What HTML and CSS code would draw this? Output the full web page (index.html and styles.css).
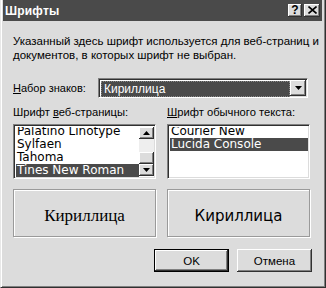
FILE: index.html
```html
<!DOCTYPE html>
<html>
<head>
<meta charset="utf-8">
<link rel="stylesheet" href="styles.css">
</head>
<body>
<div class="win">
  <div class="titlebar">
    <span class="title">Шрифты</span>
    <div class="tbtns">
      <span class="tbtn">?</span>
      <span class="tbtn close">
        <svg width="9" height="8" viewBox="0 0 9 8"><path d="M0.5 0.5L8.5 7.5M8.5 0.5L0.5 7.5" stroke="#000" stroke-width="1.6"/></svg>
      </span>
    </div>
  </div>
  <div class="body">
    <p class="intro">Указанный здесь шрифт используется для веб-страниц и документов, в которых шрифт не выбран.</p>
    <div class="charset">
      <span class="lbl"><u>Н</u>абор знаков:</span>
      <div class="combo">
        <span class="combo-val">Кириллица</span>
        <span class="combo-btn"><svg width="7" height="4" viewBox="0 0 7 4"><path d="M0 0H7L3.5 4Z" fill="#000"/></svg></span>
      </div>
    </div>
    <div class="cols">
      <div class="col">
        <div class="lbl">Шрифт <u>в</u>еб-страницы:</div>
        <div class="list">
          <div class="items">
            <div class="item">Palatino Linotype</div>
            <div class="item">Sylfaen</div>
            <div class="item">Tahoma</div>
            <div class="item sel">Tines New Roman</div>
          </div>
          <div class="sbar">
            <span class="sbtn"><svg width="7" height="4" viewBox="0 0 7 4"><path d="M0 4H7L3.5 0Z" fill="#000"/></svg></span>
            <span class="strack"></span>
            <span class="sthumb"></span>
            <span class="sbtn"><svg width="7" height="4" viewBox="0 0 7 4"><path d="M0 0H7L3.5 4Z" fill="#000"/></svg></span>
          </div>
        </div>
        <div class="preview serif">Кириллица</div>
      </div>
      <div class="col">
        <div class="lbl"><u>Ш</u>рифт обычного текста:</div>
        <div class="list">
          <div class="items">
            <div class="item">Courier New</div>
            <div class="item sel">Lucida Console</div>
          </div>
        </div>
        <div class="preview sans">Кириллица</div>
      </div>
    </div>
    <div class="buttons">
      <button class="btn default">OK</button>
      <button class="btn">Отмена</button>
    </div>
  </div>
</div>
</body>
</html>
```
FILE: styles.css
```css
html, body {
  margin: 0;
  padding: 0;
  background: #dcdcdc;
}
.win {
  width: 326px;
  height: 288px;
  box-sizing: border-box;
  background: #dcdcdc;
  border-left: 1px solid #e8e8e8;
  border-right: 1px solid #303030;
  border-bottom: 1px solid #303030;
  box-shadow: inset 1px 0 #fff, inset -1px -1px #808080;
  padding: 0 3px 0 2px;
  font-family: "Liberation Sans", Arial, sans-serif;
  font-size: 11px;
  color: #000;
  display: flex;
  flex-direction: column;
}
.titlebar {
  height: 21px;
  background: #4a4a4a;
  display: flex;
  align-items: center;
  justify-content: space-between;
  padding: 0 2px 0 2px;
}
.title {
  color: #fff;
  font-weight: bold;
  font-size: 12px;
  letter-spacing: 0.2px;
}
.tbtns {
  display: flex;
  gap: 2px;
}
.tbtn {
  width: 14px;
  height: 13px;
  background: #dcdcdc;
  box-shadow: inset -1px -1px #303030, inset 1px 1px #fff, inset -2px -2px #808080;
  display: flex;
  align-items: center;
  justify-content: center;
  font-weight: bold;
  font-size: 12px;
  line-height: 1;
  box-sizing: border-box;
  padding-bottom: 1px;
}
.tbtn.close { width: 16px; }
.body {
  padding: 0 10px 0 10px;
  display: flex;
  flex-direction: column;
}
.intro {
  margin: 13px -8px 0 0;
  line-height: 14px;
  font-size: 11.5px;
}
.charset {
  margin-top: 16px;
  display: flex;
  align-items: center;
}
.charset .lbl {
  width: 85px;
}
.combo {
  width: 210px;
  height: 20px;
  box-sizing: border-box;
  background: #fff;
  border-top: 1px solid #808080;
  border-left: 1px solid #808080;
  border-right: 1px solid #fff;
  border-bottom: 1px solid #fff;
  box-shadow: inset 1px 1px #303030, inset -1px -1px #dcdcdc;
  padding: 1px;
  display: flex;
}
.combo-val {
  flex: 1;
  background: #4a4a4a;
  color: #fff;
  font-size: 12px;
  padding-left: 2px;
  margin: 1px 0 1px 1px;
  height: 14px;
  line-height: 14px;
  border: 1px dotted #888;
}
.combo-btn {
  width: 16px;
  height: 16px;
  background: #dcdcdc;
  box-shadow: inset -1px -1px #303030, inset 1px 1px #fff, inset -2px -2px #808080;
  display: flex;
  align-items: center;
  justify-content: center;
}
.cols {
  margin-top: 8px;
  display: flex;
  gap: 11px;
}
.col {
  width: 143px;
  display: flex;
  flex-direction: column;
}
.col .lbl {
  line-height: 13px;
  font-size: 11.2px;
}
.list {
  margin-top: 5px;
  height: 55px;
  box-sizing: border-box;
  background: #fff;
  border-top: 1px solid #808080;
  border-left: 1px solid #808080;
  border-right: 1px solid #fff;
  border-bottom: 1px solid #fff;
  box-shadow: inset 1px 1px #303030, inset -1px -1px #dcdcdc;
  padding: 2px 1px 1px 2px;
  display: flex;
  overflow: hidden;
}
.items {
  flex: 1;
  overflow: hidden;
  display: flex;
  flex-direction: column;
}
.item {
  height: 13px;
  line-height: 13px;
  font-family: "DejaVu Sans", sans-serif;
  font-size: 12px;
  padding-left: 1px;
  flex: none;
  white-space: nowrap;
}
.item:first-child { margin-top: -2px; }
.item.sel {
  background: #4a4a4a;
  color: #fff;
}
.sbar {
  width: 15px;
  display: flex;
  flex-direction: column;
}
.sbtn {
  height: 12px;
  background: #dcdcdc;
  box-shadow: inset -1px -1px #303030, inset 1px 1px #fff, inset -2px -2px #808080;
  display: flex;
  align-items: center;
  justify-content: center;
  flex: none;
}
.strack {
  height: 13px;
  background: #eeeeee;
  flex: none;
}
.sthumb {
  height: 12px;
  background: #dcdcdc;
  box-shadow: inset -1px -1px #303030, inset 1px 1px #fff, inset -2px -2px #808080;
  flex: none;
}
.preview {
  margin-top: 10px;
  height: 48px;
  box-sizing: border-box;
  border: 1px solid #9a9a9a;
  box-shadow: 1px 1px #fff, inset 1px 1px #fff;
  display: flex;
  align-items: center;
  justify-content: center;
  padding-top: 6px;
}
.preview.serif {
  font-family: "Liberation Serif", "Times New Roman", serif;
  font-size: 17px;
}
.preview.sans {
  font-family: "DejaVu Sans", sans-serif;
  font-size: 15px;
}
.buttons {
  margin-top: 12px;
  display: flex;
  justify-content: flex-end;
  gap: 8px;
}
.btn {
  width: 75px;
  height: 23px;
  margin: 0;
  padding: 0;
  background: #dcdcdc;
  border: none;
  box-shadow: inset -1px -1px #303030, inset 1px 1px #fff, inset -2px -2px #808080;
  font-family: "Liberation Sans", Arial, sans-serif;
  font-size: 11.5px;
  color: #000;
}
.btn.default {
  box-shadow: inset 0 0 0 1px #000, inset -2px -2px #303030, inset 2px 2px #fff, inset -3px -3px #808080;
}
```
